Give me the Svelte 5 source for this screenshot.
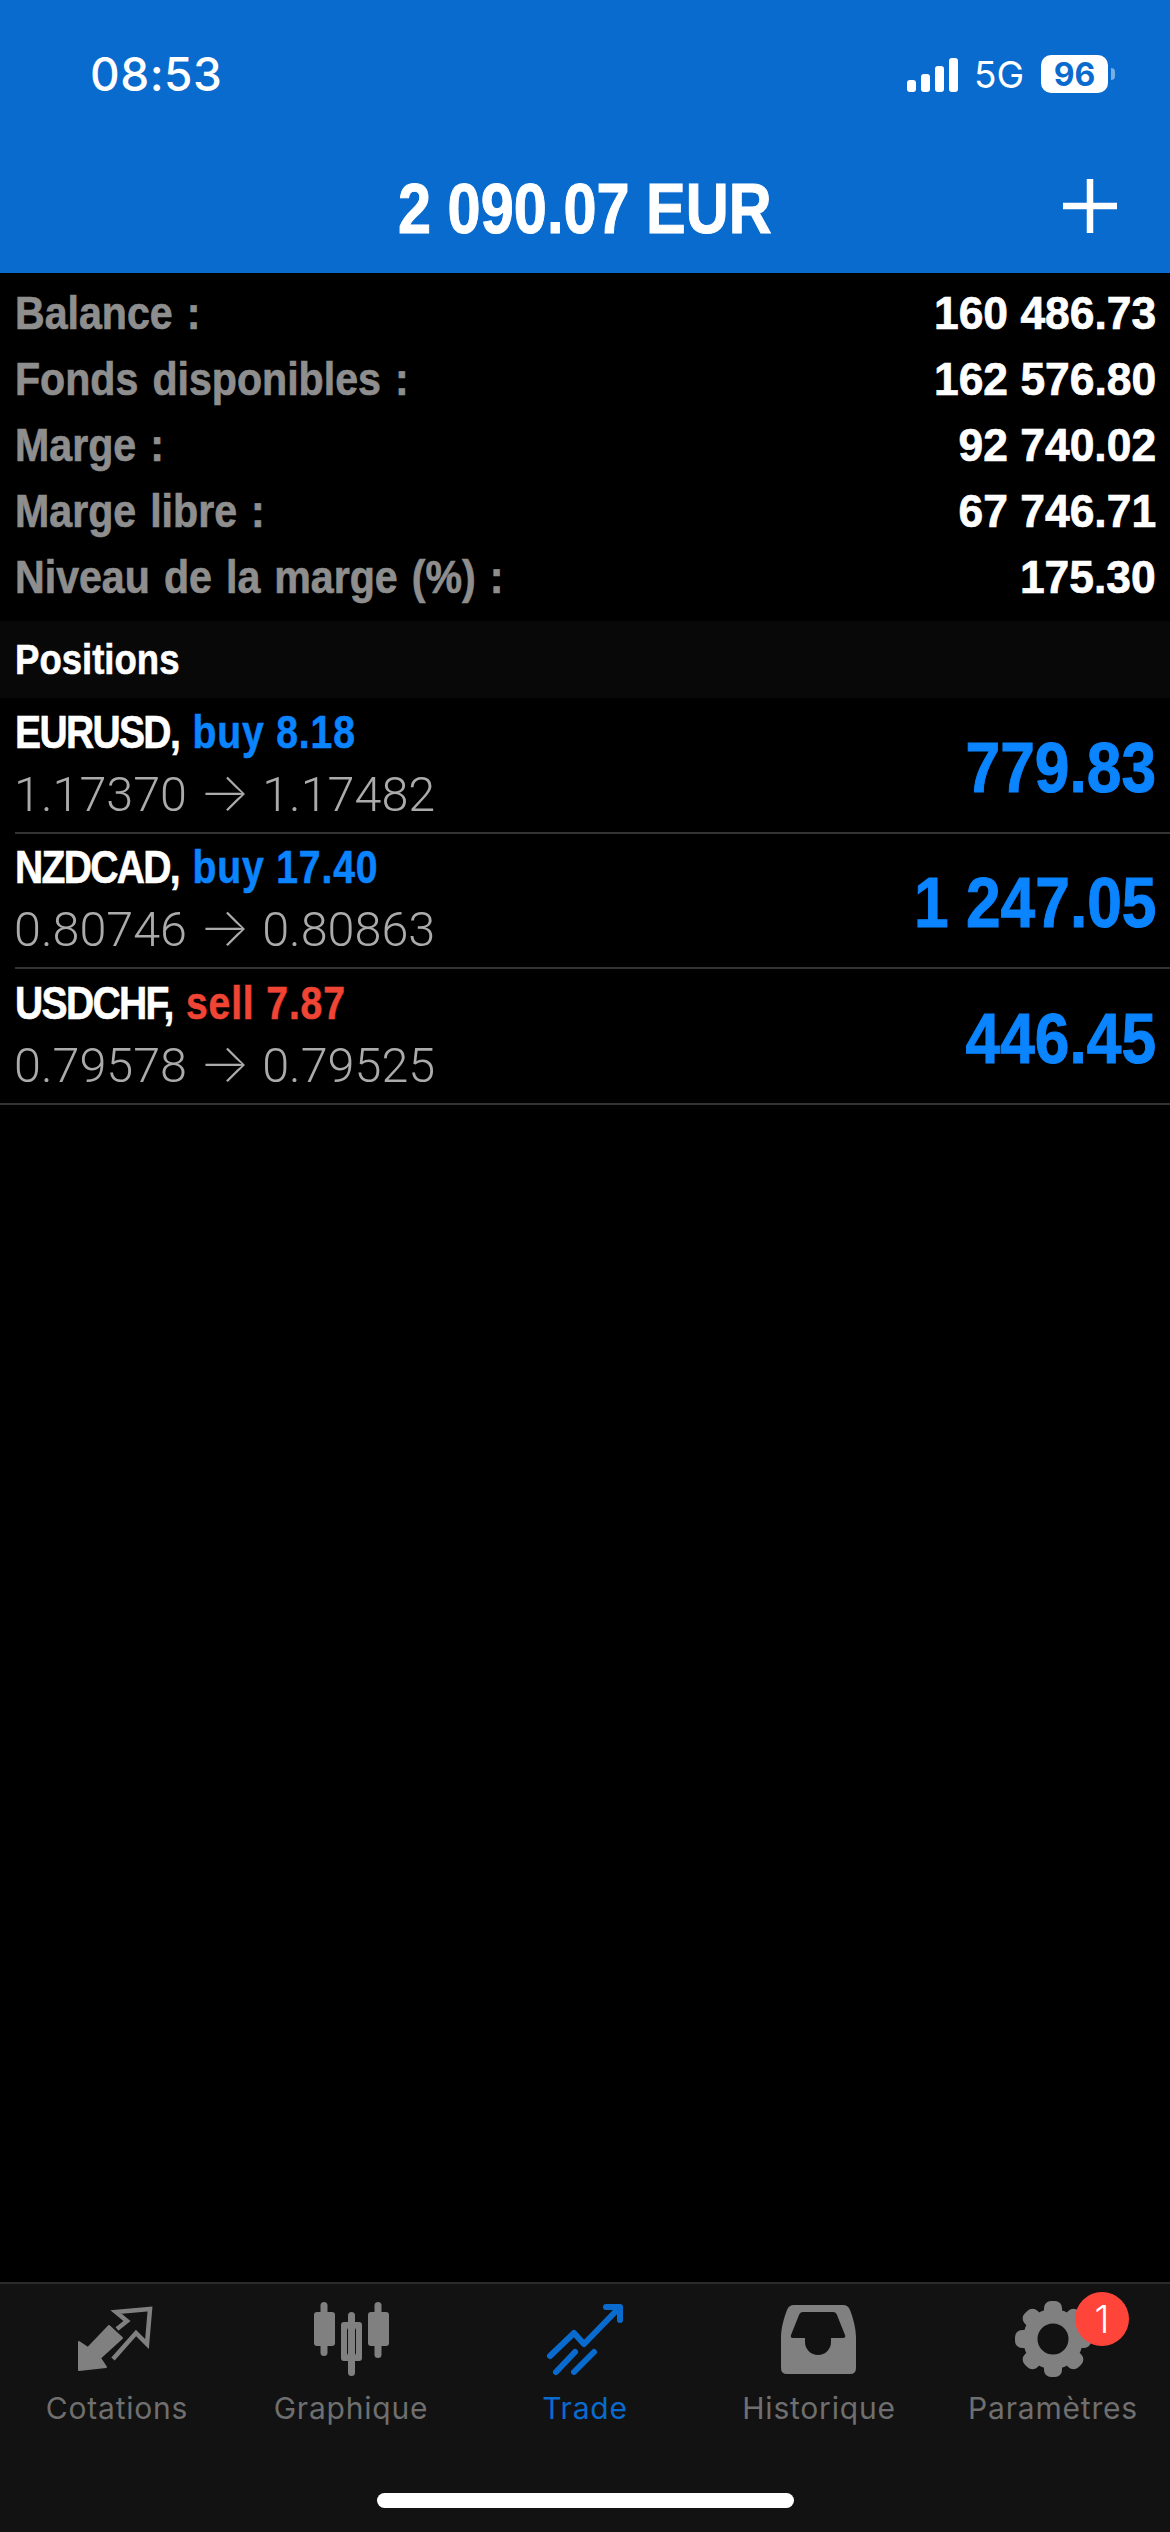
<script>
  const summary = [
    { label: 'Balance :', value: '160 486.73' },
    { label: 'Fonds disponibles :', value: '162 576.80' },
    { label: 'Marge :', value: '92 740.02' },
    { label: 'Marge libre :', value: '67 746.71' },
    { label: 'Niveau de la marge (%) :', value: '175.30' }
  ];
  const positions = [
    { symbol: 'EURUSD,', side: 'buy', lots: '8.18', open: '1.17370', now: '1.17482', profit: '779.83' },
    { symbol: 'NZDCAD,', side: 'buy', lots: '17.40', open: '0.80746', now: '0.80863', profit: '1 247.05' },
    { symbol: 'USDCHF,', side: 'sell', lots: '7.87', open: '0.79578', now: '0.79525', profit: '446.45' }
  ];
  const teeth = [0, 45, 90, 135, 180, 225, 270, 315];
</script>

<div class="screen">
  <header class="top">
    <div class="status">
      <span class="time">08:53</span>
      <div class="status-right">
        <div class="bars">
          <i class="b1"></i><i class="b2"></i><i class="b3"></i><i class="b4"></i>
        </div>
        <span class="net">5G</span>
        <div class="battery"><span>96</span></div>
        <i class="battery-cap"></i>
      </div>
    </div>
    <div class="title-bar">
      <h1 class="title">2 090.07 EUR</h1>
      <svg class="plus" width="56" height="56" viewBox="0 0 56 56" aria-hidden="true">
        <path d="M28 1v54M1 28h54" stroke="#fff" stroke-width="6.5" fill="none" />
      </svg>
    </div>
  </header>

  <main class="content">
    <section class="summary">
      {#each summary as row}
        <div class="summary-row">
          <span class="label">{row.label}</span>
          <span class="value">{row.value}</span>
        </div>
      {/each}
    </section>

    <div class="band"><span>Positions</span></div>

    {#each positions as p, i}
      <div class="position" class:last={i === positions.length - 1}>
        <div class="info">
          <div class="headline"><span class="symbol">{p.symbol}</span> <span class={p.side}>{p.side} {p.lots}</span></div>
          <div class="prices">{p.open} <span class="arrow">→</span> {p.now}</div>
        </div>
        <span class="profit">{p.profit}</span>
      </div>
    {/each}
  </main>

  <nav class="tabs">
    <div class="tab-row">
      <div class="tab">
        <svg class="icon" viewBox="0 0 120 84" aria-hidden="true">
          <path fill="#808080" stroke="#808080" stroke-width="2" stroke-linejoin="round" d="M22 44l9 6 21-22 13 12-22 20 6 9-27 3z" />
          <path fill="none" stroke="#808080" stroke-width="4.5" d="M60 31l10-8-11-9 34-3-3 35-11-11-23 26" />
        </svg>
        <span>Cotations</span>
      </div>
      <div class="tab">
        <svg class="icon" viewBox="0 0 120 84" aria-hidden="true">
          <g fill="#808080">
            <rect x="29.5" y="4" width="7" height="54" rx="3.5" />
            <rect x="23" y="14" width="21" height="34" rx="3" />
            <rect x="57" y="14" width="7" height="64" rx="3.5" />
            <rect x="83.5" y="4" width="7" height="56" rx="3.5" />
            <rect x="77" y="14" width="21" height="34" rx="3" />
            <path fill-rule="evenodd" d="M53 24h15q3 0 3 3v33q0 3-3 3H53q-3 0-3-3V27q0-3 3-3zM58 30q-2 0-2 2v23q0 2 2 2h5q2 0 2-2V32q0-2-2-2z" />
          </g>
        </svg>
        <span>Graphique</span>
      </div>
      <div class="tab active">
        <svg class="icon" viewBox="0 0 120 84" aria-hidden="true">
          <g fill="none" stroke="#0a6bcf" stroke-width="6" stroke-linecap="round" stroke-linejoin="round">
            <path d="M25 58l24-23 10 11 35-36" />
            <path d="M81 9h14v13" />
            <path d="M31 74l19-20M49 74l20-20" />
          </g>
        </svg>
        <span>Trade</span>
      </div>
      <div class="tab">
        <svg class="icon" viewBox="0 0 120 84" aria-hidden="true">
          <path fill="#808080" fill-rule="evenodd" d="M35 7h49q5 0 7 5c3 8 6 18 6 28v30q0 6-6 6H28q-6 0-6-6V40c0-10 3-20 6-28q2-5 7-5zM44 14q-3 0-4 3l-8 20q-1 3 2 3h12v4a13 13 0 0 0 26 0v-4h12q3 0 2-3l-8-20q-1-3-4-3z" />
        </svg>
        <span>Historique</span>
      </div>
      <div class="tab">
        <svg class="icon" viewBox="0 0 120 84" aria-hidden="true">
          <g fill="#808080">
            {#each teeth as angle}
              <rect x="51" y="3" width="18" height="20" rx="7" transform="rotate({angle} 60 41)" />
            {/each}
          </g>
          <circle cx="60" cy="41" r="22.75" fill="none" stroke="#808080" stroke-width="14.5" />
        </svg>
        <span>Paramètres</span>
        <b class="badge">1</b>
      </div>
    </div>
    <div class="home-indicator"></div>
  </nav>
</div>

<style>
  :global(body) {
    margin: 0;
    background: #000;
  }

  .screen {
    display: flex;
    flex-direction: column;
    width: 1170px;
    height: 2532px;
    overflow: hidden;
    font-family: "Liberation Sans", Arial, sans-serif;
    color: #fff;
  }

  .top {
    flex: none;
    height: 273px;
    background: #0a6bcf;
  }

  .status {
    display: flex;
    justify-content: space-between;
    align-items: center;
    height: 38px;
    padding: 55px 55px 0 90px;
    font-family: Inter, sans-serif;
  }

  .time {
    font-size: 46px;
    font-weight: 500;
    letter-spacing: 0.5px;
    line-height: 38px;
  }

  .status-right {
    display: flex;
    align-items: center;
  }

  .bars {
    display: flex;
    align-items: flex-end;
    gap: 5px;
    height: 34px;
    margin-top: 2px;
  }

  .bars i {
    width: 9px;
    border-radius: 3px;
    background: #fff;
  }

  .b1 { height: 12px; }
  .b2 { height: 18px; }
  .b3 { height: 26px; }
  .b4 { height: 34px; }

  .net {
    margin: 2px 0 0 16px;
    font-size: 37px;
    font-weight: 400;
    line-height: 38px;
  }

  .battery {
    display: flex;
    align-items: center;
    justify-content: center;
    box-sizing: border-box;
    width: 67px;
    height: 38px;
    margin-left: 17px;
    border-radius: 10px;
    background: #fff;
    color: #0a6bcf;
    font-size: 32px;
    font-weight: 700;
  }

  .battery-cap {
    width: 4px;
    height: 12px;
    margin-left: 3px;
    border-radius: 0 4px 4px 0;
    background: rgba(255, 255, 255, 0.45);
  }

  .title-bar {
    position: relative;
    display: flex;
    justify-content: center;
    padding-top: 76px;
  }

  .title {
    margin: 0;
    font-size: 70px;
    font-weight: 700;
    line-height: 80px;
    white-space: nowrap;
    transform: scaleX(0.85);
    -webkit-text-stroke: 1px #fff;
  }

  .plus {
    position: absolute;
    top: 85px;
    right: 52px;
  }

  .content {
    flex: 1;
    min-height: 0;
  }

  .summary {
    padding: 7px 0 11px;
  }

  .summary-row {
    display: flex;
    justify-content: space-between;
    padding: 0 14px 0 15px;
    font-size: 47px;
    font-weight: 700;
    line-height: 66px;
    white-space: nowrap;
    -webkit-text-stroke: 0.7px currentColor;
  }

  .label {
    color: #8e8e8e;
    word-spacing: 3px;
    transform: scaleX(0.875);
    transform-origin: left center;
  }

  .value {
    transform: scaleX(0.945);
    transform-origin: right center;
  }

  .band {
    height: 77px;
    padding-left: 15px;
    background: #080808;
    font-size: 43px;
    font-weight: 700;
    line-height: 77px;
    -webkit-text-stroke: 0.6px currentColor;
  }

  .band span {
    display: inline-block;
    transform: scaleX(0.85);
    transform-origin: left center;
  }

  .position {
    display: flex;
    justify-content: space-between;
    align-items: center;
    box-sizing: border-box;
    height: 135.5px;
    margin-left: 15px;
    padding: 0 14px 0 0;
    border-bottom: 2px solid #333;
  }

  .position.last {
    margin-left: 0;
    padding-left: 15px;
  }

  .info {
    white-space: nowrap;
  }

  .headline {
    font-size: 46px;
    font-weight: 700;
    line-height: 60px;
    transform: scaleX(0.85);
    transform-origin: left center;
    -webkit-text-stroke: 0.6px currentColor;
  }

  .symbol {
    letter-spacing: -2px;
    margin-right: 3px;
  }

  .buy {
    color: #0a84ff;
    letter-spacing: 1px;
  }

  .sell {
    color: #f04434;
    letter-spacing: 1px;
  }

  .prices {
    margin-left: -1px;
    color: #ababab;
    font-family: Roboto, sans-serif;
    font-size: 48.5px;
    font-weight: 300;
    line-height: 66px;
  }

  .arrow {
    font-family: Inter, sans-serif;
    font-size: 54px;
    font-weight: 200;
    line-height: 0;
  }

  .profit {
    margin-top: 6px;
    color: #0a84ff;
    font-size: 70px;
    font-weight: 700;
    line-height: 80px;
    white-space: nowrap;
    transform: scaleX(0.89);
    transform-origin: right center;
    -webkit-text-stroke: 1px currentColor;
  }

  .tabs {
    flex: none;
    box-sizing: border-box;
    height: 250px;
    border-top: 2px solid #2b2b2b;
    background: #121212;
  }

  .tab-row {
    display: grid;
    grid-template-columns: repeat(5, 1fr);
  }

  .tab {
    position: relative;
    display: flex;
    flex-direction: column;
    align-items: center;
    padding-top: 14px;
    color: #6f6f6f;
    font-family: Inter, sans-serif;
    font-size: 30px;
    letter-spacing: 0.8px;
    line-height: 36px;
  }

  .tab.active {
    color: #0a6bcf;
  }

  .icon {
    width: 120px;
    height: 84px;
    margin-bottom: 8px;
  }

  .badge {
    position: absolute;
    top: 8px;
    left: 139px;
    width: 54px;
    height: 54px;
    border-radius: 50%;
    background: #ff453a;
    color: #fff;
    font-size: 38px;
    font-weight: 300;
    letter-spacing: 0;
    line-height: 54px;
    text-align: center;
  }

  .home-indicator {
    width: 417px;
    height: 15px;
    margin: 67px auto 0;
    border-radius: 8px;
    background: #fff;
  }
</style>
